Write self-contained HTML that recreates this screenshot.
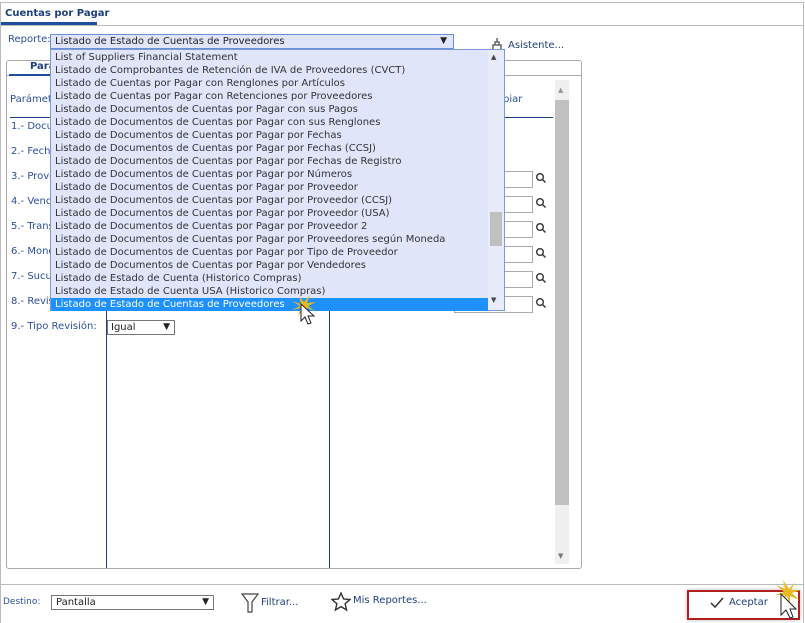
<!DOCTYPE html>
<html><head><meta charset="utf-8"><style>
*{margin:0;padding:0;box-sizing:border-box}
body{width:805px;height:623px;background:#fff;font-family:"DejaVu Sans","Liberation Sans",sans-serif;font-size:10px;color:#222;position:relative;overflow:hidden}
.a{position:absolute;white-space:nowrap}
.lbl{color:#2b4f9e;font-size:10px}
.dd div{height:13px;line-height:13px;padding-left:4px;color:#333}
.inp{position:absolute;width:79px;height:17px;border:1px solid #aaa;background:#fff}
.sr{position:absolute;width:12px;height:12px}
</style></head><body>
<div class="a" style="left:0;top:2px;width:804px;height:621px;border:1px solid #bbb;border-bottom:none"></div>
<div class="a" style="left:1px;top:25px;width:802px;height:1px;background:#bbb"></div>
<div class="a" style="left:5px;top:8px;font-weight:bold;color:#1d3f7d;font-size:10px">Cuentas por Pagar</div>
<div class="a" style="left:1px;top:22px;width:96px;height:3px;background:#1d4f9e"></div>

<div class="a" style="left:8px;top:34px;color:#2b4f9e">Reporte:</div>
<div class="a" style="left:50px;top:34px;width:404px;height:15px;border:1px solid #6a8fd6;background:#e0e5fa;padding-left:4px;line-height:13px;color:#222">Listado de Estado de Cuentas de Proveedores<span style="position:absolute;right:6px;top:0;font-size:9px">▼</span></div>
<svg class="a" style="left:489px;top:37px" width="16" height="14" viewBox="0 0 16 14"><path d="M2 13h12M4 13V8h8v5M6 8V5h4v3M8 5V1" stroke="#666" stroke-width="1.5" fill="none"/></svg>
<div class="a" style="left:508px;top:40px;color:#1d3f7d">Asistente...</div>

<!-- panel -->
<div class="a" style="left:6px;top:60px;width:576px;height:509px;border:1px solid #aaa;border-radius:3px"></div>
<div class="a" style="left:7px;top:75px;width:574px;height:1px;background:#aaa"></div>
<div class="a" style="left:30px;top:61px;font-weight:bold;color:#1d3f7d">Para</div>
<div class="a" style="left:9px;top:74px;width:90px;height:2px;background:#1d4f9e"></div>
<div class="a" style="left:10px;top:94px;color:#2b4f9e">Parámet</div>
<div class="a" style="left:503px;top:94px;color:#2b4f9e">piar</div>
<div class="a" style="left:10px;top:117px;width:543px;height:1px;background:#1d3f7d"></div>
<div class="a" style="left:555px;top:80px;width:14px;height:484px;background:#f0f0f0"></div>
<div class="a" style="left:555px;top:100px;width:14px;height:405px;background:#c0c0c0"></div>
<div class="a" style="left:558px;top:86px;font-size:7px;color:#999">▲</div>
<div class="a" style="left:558px;top:552px;font-size:7px;color:#777">▼</div>

<div class="a lbl" style="left:11px;top:121px">1.- Docu</div>
<div class="a lbl" style="left:11px;top:146px">2.- Fecha</div>
<div class="a lbl" style="left:11px;top:171px">3.- Prove</div>
<div class="a lbl" style="left:11px;top:196px">4.- Vend</div>
<div class="a lbl" style="left:11px;top:221px">5.- Trans</div>
<div class="a lbl" style="left:11px;top:246px">6.- Mone</div>
<div class="a lbl" style="left:11px;top:271px">7.- Sucu</div>
<div class="a lbl" style="left:11px;top:296px">8.- Revis</div>
<div class="a lbl" style="left:11px;top:321px">9.- Tipo Revisión:</div>
<div class="a" style="left:106px;top:300px;width:1px;height:268px;background:#1d3f7d"></div>
<div class="a" style="left:329px;top:300px;width:1px;height:268px;background:#1d3f7d"></div>
<div class="a" style="left:107px;top:320px;width:68px;height:15px;border:1px solid #777;padding-left:3px;line-height:13px">Igual<span style="position:absolute;right:4px;font-size:9px">▼</span></div>

<div class="inp" style="left:454px;top:171px"></div><div class="inp" style="left:454px;top:196px"></div>
<div class="inp" style="left:454px;top:221px"></div><div class="inp" style="left:454px;top:246px"></div>
<div class="inp" style="left:454px;top:271px"></div><div class="inp" style="left:454px;top:296px"></div>
<svg class="a" style="left:535px;top:172px" width="12" height="150"><g stroke="#333" stroke-width="1.4" fill="none">
<circle cx="5" cy="5" r="3.3"/><path d="M7.5 7.5l3 3"/>
<circle cx="5" cy="30" r="3.3"/><path d="M7.5 32.5l3 3"/>
<circle cx="5" cy="55" r="3.3"/><path d="M7.5 57.5l3 3"/>
<circle cx="5" cy="80" r="3.3"/><path d="M7.5 82.5l3 3"/>
<circle cx="5" cy="105" r="3.3"/><path d="M7.5 107.5l3 3"/>
<circle cx="5" cy="130" r="3.3"/><path d="M7.5 132.5l3 3"/></g></svg>

<!-- dropdown -->
<div class="a dd" style="left:50px;top:49px;width:455px;height:262px;border:1px solid #7a9ad8;background:#e0e5fa;padding-top:1px">
<div>List of Suppliers Financial Statement</div>
<div>Listado de Comprobantes de Retención de IVA de Proveedores (CVCT)</div>
<div>Listado de Cuentas por Pagar con Renglones por Artículos</div>
<div>Listado de Cuentas por Pagar con Retenciones por Proveedores</div>
<div>Listado de Documentos de Cuentas por Pagar con sus Pagos</div>
<div>Listado de Documentos de Cuentas por Pagar con sus Renglones</div>
<div>Listado de Documentos de Cuentas por Pagar por Fechas</div>
<div>Listado de Documentos de Cuentas por Pagar por Fechas (CCSJ)</div>
<div>Listado de Documentos de Cuentas por Pagar por Fechas de Registro</div>
<div>Listado de Documentos de Cuentas por Pagar por Números</div>
<div>Listado de Documentos de Cuentas por Pagar por Proveedor</div>
<div>Listado de Documentos de Cuentas por Pagar por Proveedor (CCSJ)</div>
<div>Listado de Documentos de Cuentas por Pagar por Proveedor (USA)</div>
<div>Listado de Documentos de Cuentas por Pagar por Proveedor 2</div>
<div>Listado de Documentos de Cuentas por Pagar por Proveedores según Moneda</div>
<div>Listado de Documentos de Cuentas por Pagar por Tipo de Proveedor</div>
<div>Listado de Documentos de Cuentas por Pagar por Vendedores</div>
<div>Listado de Estado de Cuenta (Historico Compras)</div>
<div>Listado de Estado de Cuenta USA (Historico Compras)</div>
<div style="background:#1e90ff;color:#fff;width:437px">Listado de Estado de Cuentas de Proveedores</div>
</div>
<div class="a" style="left:488px;top:50px;width:16px;height:260px;background:#e8ebf8"></div>
<div class="a" style="left:490px;top:212px;width:12px;height:34px;background:#c0c0c0"></div>
<div class="a" style="left:491px;top:53px;font-size:7px;color:#444">▲</div>
<div class="a" style="left:491px;top:296px;font-size:7px;color:#444">▼</div>
<svg class="a" style="left:285px;top:292px" width="40" height="44"><path d="M14 4l2 8 -9-3 8 5-8 4 9-2-3 8 6-7 4 8-1-9 8 3-7-5 8-4-9 1 3-8-6 7z" fill="#e8b820"/><path d="M16 12v17l4-4 3 7 3-1-3-7h6z" fill="#fff" stroke="#222"/></svg>

<!-- bottom -->
<div class="a" style="left:1px;top:584px;width:802px;height:1px;background:#bbb"></div>
<div class="a" style="left:3px;top:597px;color:#2b4f9e;font-size:9px">Destino:</div>
<div class="a" style="left:51px;top:595px;width:163px;height:15px;border:1px solid #777;padding-left:4px;line-height:13px">Pantalla<span style="position:absolute;right:4px;font-size:9px">▼</span></div>
<svg class="a" style="left:241px;top:593px" width="18" height="20"><path d="M1 1h16l-6 8v10h-4V9z" fill="none" stroke="#444" stroke-width="1.2"/></svg>
<div class="a" style="left:261px;top:597px;color:#1d3f7d">Filtrar...</div>
<svg class="a" style="left:331px;top:592px" width="20" height="20"><path d="M10 1l2.6 6 6.4.5-4.9 4.2 1.5 6.3L10 14.6 4.4 18l1.5-6.3L1 7.5l6.4-.5z" fill="none" stroke="#333" stroke-width="1.4"/></svg>
<div class="a" style="left:353px;top:595px;color:#1d3f7d">Mis Reportes...</div>
<div class="a" style="left:687px;top:590px;width:113px;height:30px;border:2px solid #b02020;box-shadow:0 0 4px #bbb"></div>
<svg class="a" style="left:710px;top:597px" width="14" height="12"><path d="M1 6l4 4 8-9" fill="none" stroke="#333" stroke-width="1.5"/></svg>
<div class="a" style="left:729px;top:597px;color:#1d3f7d">Aceptar</div>
<svg class="a" style="left:765px;top:580px" width="40" height="43"><path d="M18 0l2 9-9-4 8 7-9 3 10 0-4 8 6-7 3 9 0-9 9 4-7-7 9-3-10 0 4-8-6 7z" fill="#e8b820"/><path d="M16 14v21l5-5 4 8 3-1-3-8h6z" fill="#fff" stroke="#222"/></svg>
</body></html>
